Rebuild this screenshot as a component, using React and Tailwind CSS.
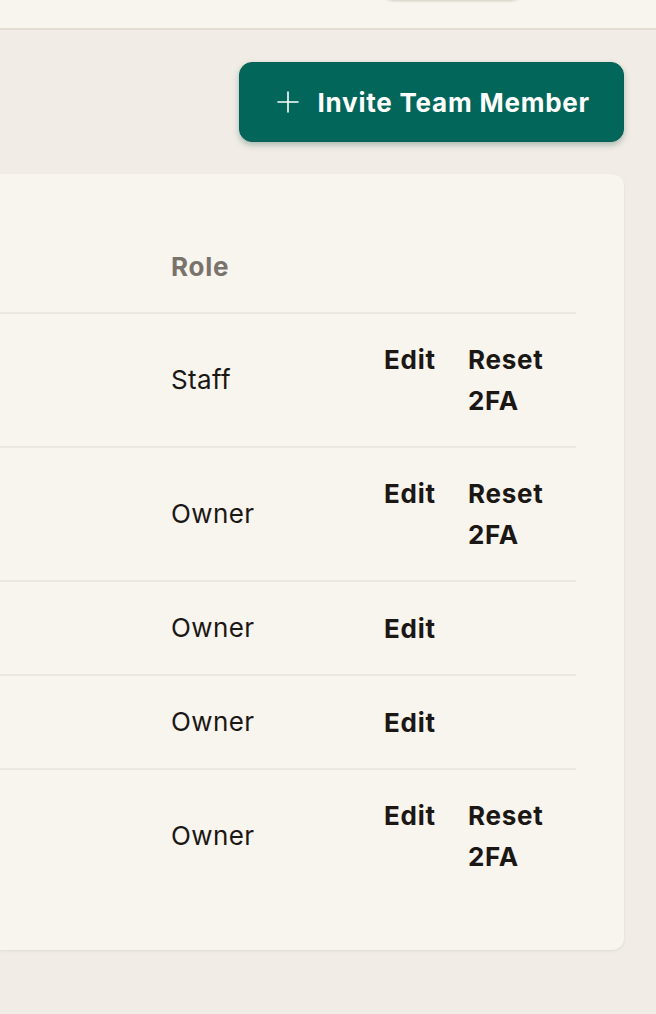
import React from "react";

const rows = [
  { role: "Staff", reset: true },
  { role: "Owner", reset: true },
  { role: "Owner", reset: false },
  { role: "Owner", reset: false },
  { role: "Owner", reset: true },
];

export default function App() {
  return (
    <div className="min-h-[1014px] w-full bg-[#f1ede6] text-[#1b1714] [font-family:Inter,'Noto_Sans',sans-serif]">
      <header className="flex h-[30px] items-start justify-start overflow-hidden border-b-2 border-[#e4ded2] bg-[#f8f4ee]">
        <div className="ml-[380px] -mt-[40px] h-[41px] w-[145px] rounded-[14px] border border-[#e0dace] bg-[#f8f4ee] shadow-[0_1px_2px_rgba(0,0,0,0.08)]" />
      </header>
      <main className="flex flex-col gap-8 pt-8 pr-8">
        <div className="flex justify-end">
          <button className="flex h-[80px] items-center gap-[18px] rounded-[13px] border border-[#075e54] bg-[#03665a] pl-[37px] pr-[33px] text-[26px] font-bold tracking-[0.03em] text-white shadow-[0_3px_6px_rgba(3,70,60,0.3)]">
            <svg width="22" height="22" viewBox="0 0 22 22" fill="none" stroke="currentColor" strokeWidth="1.6" strokeLinecap="round">
              <path d="M11 1v20M1 11h20" />
            </svg>
            <span>Invite Team Member</span>
          </button>
        </div>
        <div className="rounded-r-[12px] bg-[#f8f4ee] py-12 pr-12 shadow-[0_1px_3px_rgba(0,0,0,0.08)]">
          <table className="w-full border-collapse text-left text-[26px] tracking-[0.015em]">
            <thead>
              <tr className="border-b-2 border-[#ece7df]">
                <th className="w-[147px] p-0" />
                <th className="w-[213px] px-6 py-[26px] font-bold leading-[38px] tracking-[0.03em] text-[#79736c]">Role</th>
                <th className="px-6 py-[26px]" />
              </tr>
            </thead>
            <tbody>
              {rows.map((r, i) => (
                <tr key={i} className={i < rows.length - 1 ? "border-b-2 border-[#ece7df]" : ""}>
                  <td className="p-0" />
                  <td className="px-6 py-[26px] align-middle leading-[40px]">{r.role}</td>
                  <td className="px-6 py-[25px] align-middle">
                    <div className="flex items-start gap-8 font-bold leading-[41px] tracking-[0.03em]">
                      <button className="font-bold tracking-[0.03em]">Edit</button>
                      {r.reset && <button className="text-left font-bold tracking-[0.03em]">Reset 2FA</button>}
                    </div>
                  </td>
                </tr>
              ))}
            </tbody>
          </table>
        </div>
      </main>
    </div>
  );
}
